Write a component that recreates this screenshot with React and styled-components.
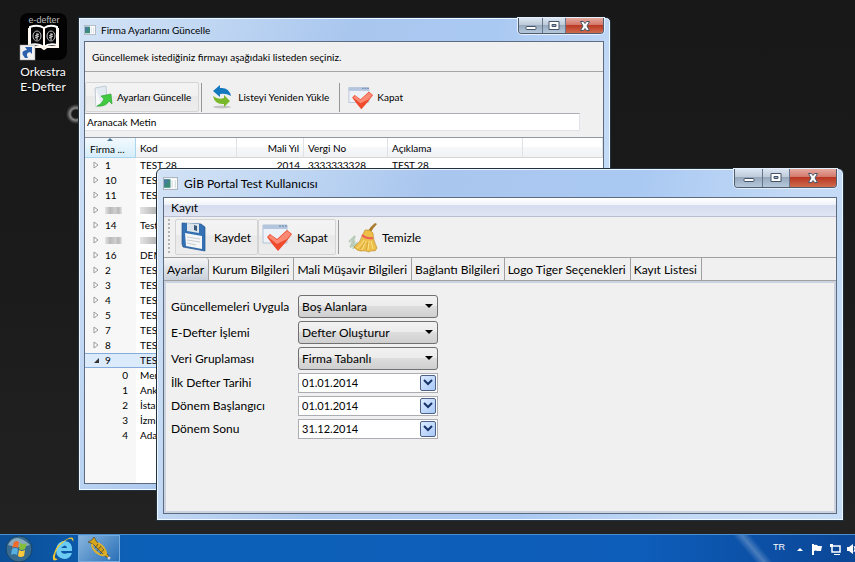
import React from 'react';
import styled, { createGlobalStyle, css } from 'styled-components';

const Global = createGlobalStyle`
  * { box-sizing: border-box; }
  body { margin: 0; font-family: Lato, "Noto Sans", sans-serif; color: #000; }
  button, input, select { font: inherit; color: inherit; }
  button { cursor: pointer; }
`;

const Desktop = styled.div`
  position: relative;
  display: flex;
  flex-direction: column;
  min-height: 100vh;
  overflow: hidden;
  background:
    radial-gradient(circle at 76px 114px, transparent 4px, #8a8a8a 6px, #4a4a4a 8px, transparent 10px),
    linear-gradient(#181818, #1b1b1b 50%, #232323);
`;

const Workspace = styled.main`
  position: relative;
  flex: 1;
`;

const Shortcut = styled.button`
  display: flex;
  flex-direction: column;
  align-items: center;
  gap: 2px;
  width: 86px;
  padding: 13px 0 0;
  border: 0;
  background: none;
  color: #fff;
  font-size: 12px;
  line-height: 15px;
  text-shadow: 0 1px 2px #000;
`;

const Frame = styled.section`
  position: absolute;
  display: flex;
  flex-direction: column;
  border: 1px solid #20303f;
  box-shadow: inset 0 0 0 1px #eef6ff;
  background:
    linear-gradient(110deg, #d3e3f6 0, #bcd4f2 150px, #a9c6ee 260px, #aac9f2 60%, #c3daf6 80%, #c8def7 100%);
`;

const ListFrame = styled(Frame)`
  inset: 17px 244px 43px 78px;
  padding: 0 6px 6px 5px;
  border-radius: 0 5px 0 0;
  font-size: 10px;
`;

const DetailFrame = styled(Frame)`
  inset: 168px 11px 13px 156px;
  padding: 0 6px 6px;
  border-radius: 6px 6px 0 0;
  font-size: 12px;
`;

const TitleBar = styled.header`
  display: flex;
  align-items: center;
  height: ${(p) => p.$height}px;
  gap: ${(p) => p.$gap}px;
`;

const Title = styled.h1`
  flex: 1;
  margin: 0;
  font-size: inherit;
  font-weight: 400;
  white-space: nowrap;
`;

const Controls = styled.div`
  display: flex;
  align-self: flex-start;
  border: 1px solid #505c6c;
  border-top: 0;
  border-radius: 0 0 4px 4px;
  overflow: hidden;
  box-shadow: 0 0 0 1px #e4f0ff;
`;

const ControlButton = styled.button`
  display: grid;
  place-items: center;
  width: ${(p) => (p.$close ? p.$wide : p.$narrow)}px;
  height: ${(p) => p.$height}px;
  padding: 0;
  border: 0;
  border-left: 1px solid #67758a;
  background: linear-gradient(#dce6f2 0, #bdcad9 45%, #97a8bc 46%, #b4c8dc 100%);
  &:first-child { border-left: 0; }
  ${(p) => p.$close && css`
    background: linear-gradient(#e5aaa0 0, #d3776a 45%, #b93622 46%, #cf6b4c 100%);
  `}
`;

const Body = styled.div`
  flex: 1;
  display: flex;
  flex-direction: column;
  min-height: 0;
  border: 1px solid #5c6b80;
  background: #f0f0f0;
`;

const Notice = styled.p`
  margin: 0;
  padding: 6px 7px;
  height: 30px;
  line-height: 18px;
  border-bottom: 1px solid #a6a6a6;
`;

const ListTools = styled.div`
  display: flex;
  align-items: flex-end;
  height: 41px;
  padding-bottom: 1px;
`;

const ToolButton = styled.button`
  display: flex;
  align-items: center;
  gap: ${(p) => p.$gap || 5}px;
  height: ${(p) => p.$height}px;
  padding: 0 ${(p) => p.$end || 7}px 0 ${(p) => p.$start || 7}px;
  white-space: nowrap;
  border: 1px solid ${(p) => (p.$raised ? '#d4d4d4' : 'transparent')};
  border-radius: 2px;
  background: ${(p) => (p.$raised ? 'linear-gradient(#f3f3f3 0, #f1f1f1 45%, #e9e9e9 46%, #ededed 100%)' : 'none')};
`;

const Divider = styled.span`
  width: 1px;
  height: ${(p) => p.$height}px;
  margin: 0 2px;
  background: #979797;
`;

const SearchInput = styled.input`
  width: calc(100% - 23px);
  height: 18px;
  margin-bottom: 6px;
  padding: 0 2px;
  border: 1px solid #e2e3ea;
  border-top-color: #abadb3;
  border-left: 0;
  background: #fff;
  outline: 0;
  flex: none;
`;

const TableBox = styled.div`
  flex: 1;
  min-height: 0;
  overflow: hidden;
  border-top: 1px solid #8e96a2;
  background: linear-gradient(90deg, #f7f7f7 51px, #fff 51px);
`;

const Table = styled.table`
  width: 100%;
  table-layout: fixed;
  border-collapse: separate;
  border-spacing: 0;
`;

const HeadCell = styled.th`
  width: ${(p) => (p.$width ? p.$width + 'px' : 'auto')};
  height: 20px;
  padding: 0 4px;
  font-weight: 400;
  line-height: 18px;
  text-align: ${(p) => p.$align || 'left'};
  white-space: nowrap;
  border-right: 1px solid #dfe2e6;
  border-bottom: 1px solid #d5d5d5;
  background: linear-gradient(#fff 0, #fff 45%, #f7f8fa 46%, #f1f2f4 100%);
`;

const SortCell = styled(HeadCell)`
  padding: 0 5px;
  border-color: #a9d6ee;
  background: linear-gradient(#f2f9fd, #d6eefb);
`;

const SortHead = styled.span`
  display: grid;
  grid-template-rows: 3px 16px;
  line-height: 16px;
  svg { justify-self: center; }
`;

const Row = styled.tr`
  ${(p) => p.$selected && css`
    td { background: #dcebfc; box-shadow: inset 0 1px #84acdd, inset 0 -1px #84acdd; }
  `}
`;

const Cell = styled.td`
  height: 15px;
  padding: 0 4px;
  line-height: 15px;
  text-align: ${(p) => p.$align || 'left'};
  white-space: nowrap;
  overflow: hidden;
`;

const TreeCell = styled(Cell)`
  padding: 0 8px;
  text-align: ${(p) => (p.$child ? 'right' : 'left')};
`;

const Twisty = styled.span`
  display: inline-flex;
  width: 12px;
`;

const Redacted = styled.span`
  display: inline-block;
  width: ${(p) => p.$width}px;
  height: 7px;
  background: linear-gradient(90deg, #e5e5e5, #b8b8b8 30%, #cfcfcf 60%, #b9b9b9 80%, #e5e5e5);
`;

const MenuBar = styled.nav`
  height: 19px;
  border-bottom: 1px solid #b8bdcf;
  background: linear-gradient(#fff 0, #eff2f9 38%, #d5dcee 42%, #dfe5f4 100%);
`;

const MenuItem = styled.button`
  height: 18px;
  padding: 0 7px;
  line-height: 20px;
  border: 0;
  background: none;
`;

const DetailTools = styled.div`
  display: flex;
  align-items: center;
  height: 41px;
  padding-left: 4px;
  border-bottom: 1px solid #a0a0a0;
`;

const Grip = styled.span`
  width: 2px;
  height: 36px;
  margin-right: 5px;
  background: repeating-linear-gradient(#b4b4b4 0 2px, transparent 2px 4px);
`;

const Tabs = styled.div`
  display: flex;
  height: 23px;
  border-bottom: 1px solid #a0a0a0;
`;

const Tab = styled.button`
  padding: 0 4px 0 3px;
  height: 22px;
  line-height: 24px;
  white-space: nowrap;
  border: 0;
  border-right: 1px solid #a0a0a0;
  border-radius: ${(p) => (p.$active ? '0 3px 0 0' : 0)};
  background: ${(p) => (p.$active ? 'linear-gradient(#f4f5f7, #c9d0da)' : 'none')};
`;

const Form = styled.form`
  flex: 1;
  display: grid;
  grid-template-columns: 127px 140px;
  grid-template-rows: 26px 26px 26px 23px 23px 23px;
  align-items: center;
  padding: 10px 5px;
  border: 2px solid #ccd3e0;
  white-space: nowrap;
`;

const SelectWrap = styled.span`
  display: grid;
  grid-template-columns: 1fr 13px;
  align-items: center;
  svg { grid-area: 1 / 2; pointer-events: none; z-index: 1; }
`;

const Select = styled.select`
  grid-area: 1 / 1 / 2 / 3;
  width: 100%;
  height: 23px;
  padding: 0 16px 0 3px;
  appearance: none;
  border: 1px solid #707070;
  border-radius: 3px;
  background: linear-gradient(#f2f2f2 0, #ebebeb 49%, #dddddd 50%, #cfcfcf 100%);
`;

const DateBox = styled.span`
  display: flex;
  align-items: center;
  height: 20px;
  padding: 0 1px 0 0;
  border: 1px solid #abadb3;
  background: #fff;
`;

const DateInput = styled.input`
  flex: 1;
  min-width: 0;
  height: 18px;
  padding: 0 3px;
  border: 0;
  outline: 0;
  background: none;
  font-size: 11px;
`;

const DateButton = styled.button`
  display: grid;
  place-items: center;
  width: 16px;
  height: 16px;
  padding: 0;
  border: 1px solid #4d6185;
  border-radius: 2px;
  background: linear-gradient(135deg, #dbeaff, #a8c9f8);
`;

const Taskbar = styled.footer`
  display: flex;
  align-items: stretch;
  height: 28px;
  border-top: 1px solid #4c8fd0;
  color: #fff;
  background:
    linear-gradient(50deg, transparent calc(100% - 94px), rgba(255, 255, 255, 0.25) calc(100% - 87px), transparent calc(100% - 80px)),
    linear-gradient(90deg, #0b4f97 0, #0c60b6 130px, #0d5dba 75%, #0b4696 100%);
`;

const TaskButton = styled.button`
  display: grid;
  place-items: center;
  width: ${(p) => p.$width}px;
  padding: 0;
  border: ${(p) => (p.$active ? '1px solid #74a9dd' : '0')};
  background: ${(p) => (p.$active ? 'linear-gradient(135deg, #86b4dd, #2a70b8)' : 'none')};
`;

const BrowserButton = styled(TaskButton)`
  justify-items: end;
  padding-right: 3px;
`;

const Tray = styled.div`
  display: flex;
  align-items: center;
  gap: 6px;
  margin-left: auto;
  font-family: "Liberation Sans", sans-serif;
  font-size: 9px;
`;

const Language = styled.span`
  margin: 0 6px 4px 0;
`;

function AppIcon({ size = 12 }) {
  return (
    <svg width={size + 2} height={size} viewBox="0 0 14 12" aria-hidden="true">
      <rect x=".5" y=".5" width="13" height="11" fill="#fff" stroke="#a9b2bd" />
      <rect x="1" y="2" width="6" height="8" fill="#3c8a7a" />
      <path d="M1 2h5l-5 7z" fill="#4c75b8" opacity=".6" />
      <path d="M8 3h1v7h-1zM11 3h1v7h-1z" fill="#cdd5dc" />
    </svg>
  );
}

function DefterLogo() {
  return (
    <svg width="50" height="49" viewBox="0 0 50 49" aria-hidden="true">
      <rect x="2" y="0" width="47" height="47" rx="8" fill="#030303" />
      <text x="26" y="10" textAnchor="middle" fill="#bdbdbd" fontSize="9" fontFamily="Liberation Sans, sans-serif">e-defter</text>
      <path d="M12 14Q20 11 26 15Q32 11 39 14V32Q31 30 26 34Q20 30 12 32Z" fill="#050505" stroke="#fff" strokeWidth="2" />
      <path d="M26 15V34M11 15V34H23L26 36L29 34H40V15" fill="none" stroke="#fff8ee" strokeWidth="2" />
      <ellipse cx="19" cy="23" rx="4" ry="5" fill="none" stroke="#bbb" />
      <ellipse cx="33" cy="23" rx="4" ry="5" fill="none" stroke="#bbb" />
      <path d="M19 20v7M17 23l4-2M17 25l4-2M33 20v7M31 23l4-2M31 25l4-2" stroke="#ddd" />
      <rect x="2" y="32" width="15" height="15" fill="#f1f1f1" stroke="#999" strokeWidth=".5" />
      <path d="M7 45Q1 38 9 37L7 34H14V41L12 39Q7 40 10 45Z" fill="#2c62ad" />
    </svg>
  );
}

function ControlGlyph({ type }) {
  return (
    <svg width="14" height="12" viewBox="0 0 14 12" aria-hidden="true" stroke="#465468" fill="#fff">
      {type === 'Küçült' && <rect x="2" y="6.500" width="10" height="3" rx="1" />}
      {type === 'Büyüt' && <path fillRule="evenodd" d="M2 1.500h10v8H2zM5 4.500h4v2H5z" />}
      {type === 'Kapat' && <path d="M2.500 1.500h3L7 3.500l1.500-2h3L9 6l2.500 4.500h-3L7 8.500l-1.500 2h-3L5 6z" />}
    </svg>
  );
}

function WindowControls({ narrow, wide, height }) {
  return (
    <Controls>
      {['Küçült', 'Büyüt', 'Kapat'].map((name) => (
        <ControlButton key={name} type="button" $narrow={narrow} $wide={wide} $height={height} $close={name === 'Kapat'} aria-label={name}>
          <ControlGlyph type={name} />
        </ControlButton>
      ))}
    </Controls>
  );
}

function ExportIcon() {
  return (
    <svg width="20" height="24" viewBox="0 0 20 24" aria-hidden="true">
      <path d="M2 3l11-2 1 17-11 4z" fill="#e3ebf2" stroke="#c2cbd3" />
      <path d="M3 3l5 16-5 2z" fill="#fff" opacity=".7" />
      <path d="M4 21Q9 19 11 14L8 11L18 9L19 19L16 16Q13 22 4 21Z" fill="#3fca3f" stroke="#259827" strokeWidth=".6" />
    </svg>
  );
}

function RefreshIcon() {
  return (
    <svg width="20" height="24" viewBox="0 0 20 24" aria-hidden="true">
      <ellipse cx="10" cy="22" rx="9" ry="1.500" fill="#c4c4c4" />
      <path d="M1 6L8 0V3Q17 2 19 11Q14 8 8 9V12Z" fill="#1479bf" />
      <path d="M1 11Q6 15 12 13V10L18 16L12 22V19Q3 20 1 11Z" fill="#78b82a" />
    </svg>
  );
}

function CheckIcon({ size }) {
  return (
    <svg width={size} height={size} viewBox="0 0 30 30" aria-hidden="true">
      <path d="M1 3h24v18H1z" fill="#edf2f9" stroke="#b6c2d6" />
      <path d="M1 3h24v4H1z" fill="#b4c5de" />
      <path d="M17 4h2M20 4h2M23 4h2" stroke="#5d7ba9" />
      <path d="M5 15l3-3 7 5L25 8l5 4-6 8-8 9-5-6z" fill="#ef4a2c" />
      <path d="M6 15l3-2 6 5L25 9l4 3-4 5-10 5z" fill="#ff9f8c" opacity=".75" />
    </svg>
  );
}

function DiskIcon() {
  return (
    <svg width="26" height="30" viewBox="0 0 26 30" aria-hidden="true">
      <path d="M1 1L20 2L24 5V29L2 25L1 22Z" fill="#3470b4" stroke="#245690" strokeWidth=".7" />
      <path d="M6 1L18 2V11L6 9Z" fill="#dce3e9" />
      <path d="M13 3l3 1v5l-3-1z" fill="#38597e" />
      <path d="M4 11L21 14V27L5 24Z" fill="#f4f5f6" />
      <path d="M6 15l13 2M6 18l13 2M6 21l9 2" stroke="#c8ccd0" />
    </svg>
  );
}

function BroomIcon() {
  return (
    <svg width="30" height="31" viewBox="0 0 30 31" aria-hidden="true">
      <path d="M1 20l6-6-3 7 3-2-5 6 6-3-3 5" fill="none" stroke="#bacdba" strokeWidth="2" />
      <path d="M20 9Q22 5 27 1L29 2Q25 6 23 10Z" fill="#a87a2b" />
      <path d="M17 8Q22 7 25 11Q25 18 29 26L27 29Q23 28 21 30Q17 28 13 29Q9 29 6 25Q13 20 14 14Z" fill="#edbf48" stroke="#b98423" strokeWidth=".6" />
      <path d="M14 13Q18 17 25 16" fill="none" stroke="#ea5c55" strokeWidth="2" />
      <path d="M9 26Q15 22 16 18M14 28l4-9M20 28l1-9M25 27l-2-8" fill="none" stroke="#fae28a" />
      <path d="M12 27l5-7M18 28l2-8" stroke="#cf9a35" strokeWidth=".7" />
    </svg>
  );
}

function StartIcon() {
  return (
    <svg width="28" height="27" viewBox="0 0 28 27" aria-hidden="true">
      <circle cx="14" cy="14" r="13" fill="#386b90" stroke="#174468" />
      <path d="M3 10Q10-4 25 10Q15 14 3 10Z" fill="#a9c4d6" opacity=".7" />
      <path d="M9 7q3-2 5 0l-1 6q-3-2-6 0z" fill="#f26b2d" />
      <path d="M15 8q4 2 7 0l-2 6q-3 2-6 0z" fill="#85bf3a" />
      <path d="M7 14q3-2 6 0l-1 6q-3-2-6 0z" fill="#58b0e2" />
      <path d="M14 15q3 2 6 0l-1 6q-4 2-6 0z" fill="#ffc93c" />
    </svg>
  );
}

function BrowserIcon() {
  return (
    <svg width="23" height="25" viewBox="0 0 23 25" aria-hidden="true">
      <path d="M20 15H9Q10 19 16 17H20Q18 23 12 23Q4 22 4 14Q5 5 13 5Q21 6 20 15ZM9 12H15Q14 7 9 12Z" fill="#6ccbf5" fillRule="evenodd" />
      <path d="M6 23Q0 27 1 20Q4 8 15 3Q23-1 21 6Q20 0 13 5Q4 11 3 20Q2 23 6 23Z" fill="#f6cb2b" />
    </svg>
  );
}

function HornIcon() {
  return (
    <svg width="25" height="25" viewBox="0 0 25 25" aria-hidden="true">
      <path d="M1 6Q5 5 7 1Q9 6 13 9L21 19L23 23L18 20L7 9Q4 7 1 6Z" fill="#d6a51c" stroke="#4e4526" strokeWidth=".7" />
      <path d="M5 8Q5 14 12 18Q17 21 19 17Q18 11 11 7" fill="none" stroke="#e0b22b" strokeWidth="2" />
      <path d="M10 15l4-5M8 12l3-4M13 18l4-5" stroke="#6f5a1e" />
      <circle cx="22" cy="22" r="1.500" fill="#d5d5d5" />
    </svg>
  );
}

function Arrow({ open }) {
  return (
    <svg width="7" height="8" viewBox="0 0 7 8" aria-hidden="true">
      <path d={open ? 'M6 2v5H1z' : 'M1 1l4 3-4 3z'} fill={open ? '#333' : '#fff'} stroke={open ? 'none' : '#999'} />
    </svg>
  );
}

const companies = [
  ['1', 'TEST 28', '2014', '3333333328', 'TEST 28'],
  ['10', 'TEST'], ['11', 'TEST'], [null], ['14', 'Test'], [null], ['16', 'DEMO'],
  ['2', 'TEST'], ['3', 'TEST'], ['4', 'TEST'], ['5', 'TEST'], ['7', 'TEST'], ['8', 'TEST'], ['9', 'TEST'],
];
const branches = [['0', 'Merkez'], ['1', 'Ankara'], ['2', 'İstan'], ['3', 'İzmir'], ['4', 'Adana']];
const tabs = ['Ayarlar', 'Kurum Bilgileri', 'Mali Müşavir Bilgileri', 'Bağlantı Bilgileri', 'Logo Tiger Seçenekleri', 'Kayıt Listesi'];
const choices = [['apply', 'Güncellemeleri Uygula', 'Boş Alanlara'], ['process', 'E-Defter İşlemi', 'Defter Oluşturur'], ['group', 'Veri Gruplaması', 'Firma Tabanlı']];
const dates = [['first', 'İlk Defter Tarihi', '01.01.2014'], ['start', 'Dönem Başlangıcı', '01.01.2014'], ['end', 'Dönem Sonu', '31.12.2014']];

function CompanyWindow() {
  return (
    <ListFrame aria-label="Firma Ayarlarını Güncelle">
      <TitleBar $height={23} $gap={5}><AppIcon size={10} /><Title>Firma Ayarlarını Güncelle</Title><WindowControls narrow={23} wide={38} height={15} /></TitleBar>
      <Body>
        <Notice>Güncellemek istediğiniz firmayı aşağıdaki listeden seçiniz.</Notice>
        <ListTools>
          <ToolButton type="button" $raised $height={30} $gap={4}><ExportIcon />Ayarları Güncelle</ToolButton>
          <Divider $height={29} />
          <ToolButton type="button" $height={30} $gap={6}><RefreshIcon />Listeyi Yeniden Yükle</ToolButton>
          <Divider $height={29} />
          <ToolButton type="button" $height={30} $start={5} $gap={4}><CheckIcon size={25} />Kapat</ToolButton>
        </ListTools>
        <SearchInput aria-label="Aranacak Metin" defaultValue="Aranacak Metin" />
        <TableBox>
          <Table>
            <thead>
              <tr>
                <SortCell $width={51}>
                  <SortHead>
                    <svg width="6" height="3" viewBox="0 0 6 3" aria-hidden="true"><path d="M0 3l3-3 3 3z" fill="#4b7896" /></svg>
                    Firma ...
                  </SortHead>
                </SortCell>
                <HeadCell $width={101}>Kod</HeadCell>
                <HeadCell $width={67} $align="right">Mali Yıl</HeadCell>
                <HeadCell $width={84}>Vergi No</HeadCell>
                <HeadCell $width={135}>Açıklama</HeadCell>
                <HeadCell aria-hidden="true" />
              </tr>
            </thead>
            <tbody>
              {companies.map(([id, ...cells], index) => (
                <Row key={index} $selected={id === '9'}>
                  <TreeCell><Twisty><Arrow open={id === '9'} /></Twisty>{id || <Redacted $width={17} />}</TreeCell>
                  {[0, 1, 2, 3, 4].map((i) => (
                    <Cell key={i} $align={i === 1 ? 'right' : 'left'}>{id ? cells[i] : i === 0 && <Redacted $width={50} />}</Cell>
                  ))}
                </Row>
              ))}
              {branches.map(([id, name]) => (
                <Row key={id}><TreeCell $child>{id}</TreeCell><Cell>{name}</Cell></Row>
              ))}
            </tbody>
          </Table>
        </TableBox>
      </Body>
    </ListFrame>
  );
}

function DetailWindow() {
  return (
    <DetailFrame aria-label="GİB Portal Test Kullanıcısı">
      <TitleBar $height={28} $gap={6}><AppIcon size={13} /><Title>GİB Portal Test Kullanıcısı</Title><WindowControls narrow={27} wide={47} height={18} /></TitleBar>
      <Body>
        <MenuBar><MenuItem type="button">Kayıt</MenuItem></MenuBar>
        <DetailTools>
          <Grip />
          <ToolButton type="button" $raised $height={36} $start={5} $end={6} $gap={7}><DiskIcon />Kaydet</ToolButton>
          <ToolButton type="button" $raised $height={36} $start={3}><CheckIcon size={30} />Kapat</ToolButton>
          <Divider $height={34} />
          <ToolButton type="button" $height={36} $start={6} $gap={4}><BroomIcon />Temizle</ToolButton>
        </DetailTools>
        <Tabs role="tablist">
          {tabs.map((name, i) => <Tab key={name} type="button" role="tab" aria-selected={i === 0} $active={i === 0}>{name}</Tab>)}
        </Tabs>
        <Form>
          {choices.map(([id, label, value]) => (
            <React.Fragment key={id}>
              <label htmlFor={id}>{label}</label>
              <SelectWrap>
                <Select id={id}><option>{value}</option></Select>
                <svg width="8" height="5" viewBox="0 0 8 5" aria-hidden="true"><path d="M0 0h8L4 4z" /></svg>
              </SelectWrap>
            </React.Fragment>
          ))}
          {dates.map(([id, label, value]) => (
            <React.Fragment key={id}>
              <label htmlFor={id}>{label}</label>
              <DateBox>
                <DateInput id={id} defaultValue={value} />
                <DateButton type="button" aria-label={`${label} seç`}>
                  <svg width="10" height="7" viewBox="0 0 10 7" aria-hidden="true"><path d="M1 1l4 4 4-4" fill="none" stroke="#173267" strokeWidth="2" /></svg>
                </DateButton>
              </DateBox>
            </React.Fragment>
          ))}
        </Form>
      </Body>
    </DetailFrame>
  );
}

export default function App() {
  return (
    <>
      <Global />
      <Desktop>
        <Workspace>
          <Shortcut type="button"><DefterLogo /><span>Orkestra<br />E-Defter</span></Shortcut>
          <CompanyWindow />
          <DetailWindow />
        </Workspace>
        <Taskbar>
          <TaskButton type="button" $width={38} aria-label="Başlat"><StartIcon /></TaskButton>
          <BrowserButton type="button" $width={40} aria-label="Tarayıcı"><BrowserIcon /></BrowserButton>
          <TaskButton type="button" $width={42} $active aria-label="Orkestra"><HornIcon /></TaskButton>
          <Tray>
            <Language>TR</Language>
            <svg width="58" height="12" viewBox="0 0 58 12" fill="#fff" aria-hidden="true">
              <path d="M0 8l3-3 3 3z" />
              <path d="M15 1h2v11h-2zM17 2q3-1 4 1h4l-1 5h-4q-1-1-3 0z" />
              <path d="M35 3h8v6h-8z" fill="none" stroke="#fff" strokeWidth="1.500" />
              <path d="M37 11h6v1h-6zM33 1h3v3h-3z" />
              <path d="M50 4h2l4-3v10l-4-3h-2z" />
              <path d="M57 3q2 3 0 6" fill="none" stroke="#fff" />
            </svg>
          </Tray>
        </Taskbar>
      </Desktop>
    </>
  );
}
